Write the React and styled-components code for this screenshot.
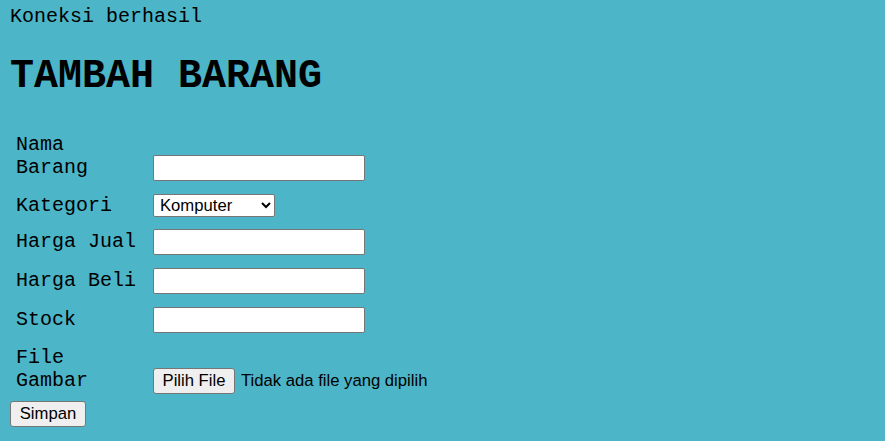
import styled, { createGlobalStyle } from "styled-components";

const GlobalStyle = createGlobalStyle`
    body {
        margin: 0;
        background: #4cb5c8;
        font-family: "Liberation Mono", "Courier New", monospace;
        font-size: 20px;
        color: #000;
    }
`
const Page = styled.div`
    padding: 5px 10px 0 10px;
`
const Status = styled.div`
    line-height: normal;
`
const Title = styled.h1`
    font-size: 40px;
    font-weight: bold;
    margin: 26px 0 0 0;
    line-height: normal;
`
const Form = styled.form`
    display: flex;
    flex-direction: column;
    margin-top: 34px;
`
const Row = styled.div`
    display: grid;
    grid-template-columns: 137px auto;
    align-items: last baseline;
    padding-left: 6px;
    margin-top: ${props => props.$mt}px;
`
const Label = styled.div`
    width: 125px;
    line-height: normal;
`
const TextInput = styled.input`
    box-sizing: border-box;
    width: 212px;
    height: 26px;
    padding: 1px 3px;
    border: 1px solid #767676;
    border-radius: 2px;
    background: #fff;
    font-family: "Liberation Sans", Arial, sans-serif;
    font-size: 16.67px;
    justify-self: start;
`
const Select = styled.select`
    box-sizing: border-box;
    width: 122px;
    height: 23px;
    padding-left: 2px;
    border: 1px solid #767676;
    border-radius: 2px;
    background: #fff;
    color: #000;
    font-family: "Liberation Sans", Arial, sans-serif;
    font-size: 16.67px;
    justify-self: start;
`
const FileBox = styled.div`
    display: flex;
    align-items: baseline;
    gap: 6px;
    font-family: "Liberation Sans", Arial, sans-serif;
    font-size: 16.67px;
`
const Button = styled.button`
    box-sizing: border-box;
    width: ${props => props.$w}px;
    height: 26px;
    padding: 0;
    border: 1px solid #767676;
    border-radius: 3px;
    background: #efefef;
    color: #000;
    font-family: "Liberation Sans", Arial, sans-serif;
    font-size: 16.67px;
`
const Submit = styled(Button)`
    margin-top: 7px;
    align-self: flex-start;
`

const App = () => {
    return (
        <>
            <GlobalStyle />
            <Page>
                <Status>Koneksi berhasil</Status>
                <Title>TAMBAH BARANG</Title>
                <Form onSubmit={e => e.preventDefault()}>
                    <Row $mt={0}>
                        <Label>Nama Barang</Label>
                        <TextInput type="text" />
                    </Row>
                    <Row $mt={13}>
                        <Label>Kategori</Label>
                        <Select defaultValue="Komputer">
                            <option>Komputer</option>
                            <option>Elektronik</option>
                        </Select>
                    </Row>
                    <Row $mt={12}>
                        <Label>Harga Jual</Label>
                        <TextInput type="text" />
                    </Row>
                    <Row $mt={13}>
                        <Label>Harga Beli</Label>
                        <TextInput type="text" />
                    </Row>
                    <Row $mt={13}>
                        <Label>Stock</Label>
                        <TextInput type="text" />
                    </Row>
                    <Row $mt={13}>
                        <Label>File Gambar</Label>
                        <FileBox>
                            <Button type="button" $w={82}>Pilih File</Button>
                            <span>Tidak ada file yang dipilih</span>
                        </FileBox>
                    </Row>
                    <Submit type="submit" $w={76}>Simpan</Submit>
                </Form>
            </Page>
        </>
    )
}

export default App;
